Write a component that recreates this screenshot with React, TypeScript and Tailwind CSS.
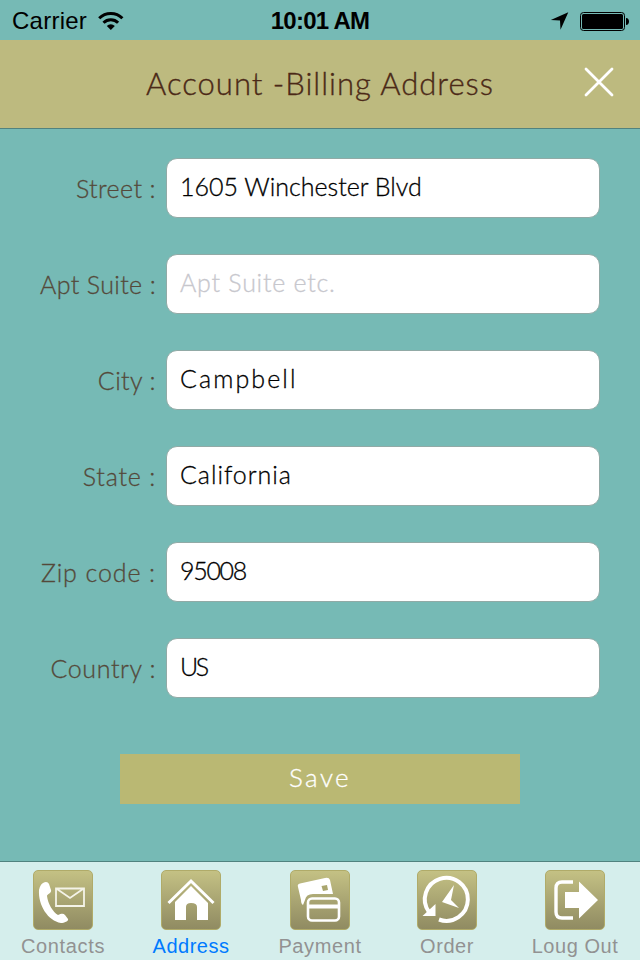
import type { ReactNode } from "react";

type Field = { label: string; value: string; labelTracking: string; valueTracking: string; placeholder?: boolean };

const fields: Field[] = [
  { label: "Street :", value: "1605 Winchester Blvd", labelTracking: "tracking-[0.4px]", valueTracking: "tracking-[0px]" },
  { label: "Apt Suite :", value: "Apt Suite etc.", labelTracking: "tracking-[0.35px]", valueTracking: "tracking-[0.75px]", placeholder: true },
  { label: "City :", value: "Campbell", labelTracking: "tracking-[0.4px]", valueTracking: "tracking-[2.1px]" },
  { label: "State :", value: "California", labelTracking: "tracking-[0.8px]", valueTracking: "tracking-[0.95px]" },
  { label: "Zip code :", value: "95008", labelTracking: "tracking-[0.9px]", valueTracking: "tracking-[-1.3px]" },
  { label: "Country :", value: "US", labelTracking: "tracking-[0.6px]", valueTracking: "tracking-[-2.5px]" },
];

function StatusBar() {
  return (
    <div className="grid h-10 grid-cols-3 items-center font-['Liberation_Sans',sans-serif] text-black">
      <div className="flex items-center gap-[11px] pl-3">
        <span className="pt-px text-[24px] leading-10 tracking-[0.25px]">Carrier</span>
        <svg width="26" height="20" viewBox="0 0 26 20" fill="none" stroke="#000" strokeWidth="3">
          <path d="M1.2 7.2a16.4 16.4 0 0 1 23.2 0" />
          <path d="M5.5 11.8a10.3 10.3 0 0 1 14.6 0" />
          <path d="M12.8 19 8.8 15a5.7 5.7 0 0 1 8 0z" fill="#000" stroke="none" />
        </svg>
      </div>
      <span className="pt-px text-center text-[24px] font-bold leading-10 whitespace-nowrap tracking-[-0.75px]">10:01 AM</span>
      <div className="flex items-center justify-end gap-[11px] pr-[11px]">
        <svg width="19" height="19" viewBox="0 0 19 19">
          <path d="M18.3 1.3 10.5 18.7 10 9.5.8 9z" fill="#000" />
        </svg>
        <svg width="49" height="20" viewBox="0 0 49 20">
          <rect x=".5" y="1.5" width="44" height="18" rx="3" fill="none" stroke="#000" />
          <rect x="2" y="3" width="41" height="15" rx="1.5" fill="#000" />
          <path d="M46 7c4 0 4 7 0 7z" fill="#000" />
        </svg>
      </div>
    </div>
  );
}

function FieldRow({ field }: { field: Field }) {
  return (
    <div className="flex h-[60px] items-center">
      <div className={`w-[156px] text-right text-[25px] leading-[58px] -mt-px whitespace-pre text-[#54493a] [-webkit-text-stroke:0.3px] ${field.labelTracking}`}>{field.label}</div>
      <div className={`ml-[10px] flex h-[60px] w-[434px] items-center rounded-[11px] border border-[#91aaa6] bg-white pb-[2px] pl-[13px] text-[25px] ${field.placeholder ? "text-[#c7c7cd]" : "text-black"}`}>
        <span className={`whitespace-nowrap [-webkit-text-stroke:0.3px] ${field.valueTracking}`}>{field.value}</span>
      </div>
    </div>
  );
}

function Tile({ children }: { children: ReactNode }) {
  return (
    <div className="h-[60px] w-[60px] rounded-[5px] border border-[#b0ab69] bg-linear-to-b from-[#c4c184] to-[#908b62]">
      <svg width="60" height="60" viewBox="0 0 60 60" className="-m-px block">
        {children}
      </svg>
    </div>
  );
}

function Tab({ label, className, children }: { label: string; className: string; children: ReactNode }) {
  return (
    <div className={`flex w-32 flex-col items-center pt-2 ${className}`}>
      <Tile>{children}</Tile>
      <span className="mt-[2px] text-[20px] leading-7 whitespace-nowrap">{label}</span>
    </div>
  );
}

export default function App() {
  return (
    <div className="flex h-[960px] w-[640px] flex-col overflow-hidden bg-[#76bab5] font-['Lato',sans-serif] font-light">
      <StatusBar />
      <header className="grid h-[89px] grid-cols-[1fr_auto_1fr] items-center border-b border-[#50827f] bg-[#bdba7f]">
        <span />
        <h1 className="pb-[2px] text-[31px] leading-[86px] whitespace-nowrap text-[#4b2917] tracking-[1px] [-webkit-text-stroke:0.35px]">Account -Billing Address</h1>
        <svg width="30" height="30" viewBox="0 0 30 30" className="mr-[26px] -mt-[5px] justify-self-end">
          <path d="M2 2 28 28M28 2 2 28" stroke="#fff" strokeWidth="2.8" strokeLinecap="round" />
        </svg>
      </header>
      <main className="flex flex-1 flex-col pt-[29px]">
        <div className="flex flex-col gap-9">
          {fields.map((f) => (
            <FieldRow key={f.label} field={f} />
          ))}
        </div>
        <button className="mt-14 h-[50px] w-[400px] self-center bg-[#bab873] pb-[4px] text-[26px] leading-[46px] tracking-[2.4px] text-white [-webkit-text-stroke:0.3px]">Save</button>
      </main>
      <nav className="flex h-[99px] border-t border-[#50827f] bg-[#d5eeec] font-['Liberation_Sans',sans-serif] font-normal">
        <Tab label="Contacts" className="pr-[2px] text-[#929292] tracking-[0.65px]">
          <path d="M10 13C13 11 15 12 16 14L18 20C19 23 14 24 14 26C15 34 20 42 25 45C28 44 30 43 32 45L35 49C36 51 31 53 28 53C15 51 5 35 6 20C7 16 8 14 10 13Z" fill="#fff" />
          <path d="M23 18.5H51V36H23zM24 19 37 28 50 19" fill="none" stroke="#f4f3e8" strokeWidth="1.8" />
        </Tab>
        <Tab label="Address" className="pr-[2px] text-[#007aff] tracking-[0.5px]">
          <path d="M7.5 33 30 11 52.5 33" fill="none" stroke="#fff" strokeWidth="3" />
          <path d="M30 16 47 33V50H36V37Q36 33 30 33Q25 33 25 37V50H14V32Z" fill="#fff" />
        </Tab>
        <Tab label="Payment" className="text-[#929292] tracking-[0.6px]">
          <path d="M8 17Q7 14 10 13.5L35 8Q39 7 40 10L43 24H23Q16 24 15 30L13 35Q11 34 11 30Z" fill="#fff" />
          <path d="M31.5 16 37 15 38 20 33 21Z" fill="#aaa66f" />
          <rect x="18" y="28.5" width="31" height="22" rx="4" fill="none" stroke="#fff" strokeWidth="2.6" />
          <path d="M19 36.5H49" stroke="#fff" strokeWidth="4" />
        </Tab>
        <Tab label="Order" className="pr-[2px] text-[#929292] tracking-[0.55px]">
          <path d="M22 49.5A21.5 21.5 0 1 0 12 42" fill="none" stroke="#fff" strokeWidth="4" />
          <path d="M5.5 46 18.5 34V46Z" fill="#fff" />
          <path d="M37 15 34 30 42 38 25 32Z" fill="#fff" />
        </Tab>
        <Tab label="Loug Out" className="pr-[2px] text-[#929292] tracking-[0.55px]">
          <path d="M28 12H17Q11 12 11 18V42Q11 48 17 48H28" fill="none" stroke="#fff" strokeWidth="3.4" />
          <path d="M20 22H34V11.5L53 30 34 48.5V38H20Z" fill="#fff" />
        </Tab>
      </nav>
    </div>
  );
}
